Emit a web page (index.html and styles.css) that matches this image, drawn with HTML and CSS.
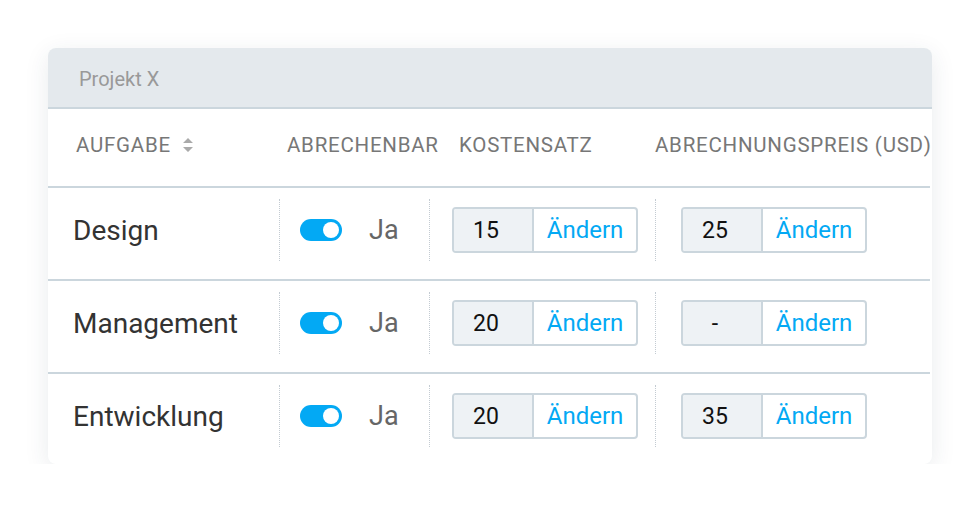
FILE: index.html
```html
<!DOCTYPE html>
<html lang="de">
<head>
  <meta charset="UTF-8">
  <title>Projekt X - Aufgaben</title>
  <link rel="stylesheet" href="styles.css">
</head>
<body>
  <div class="card">
    <div class="card-title">Projekt X</div>
    <div class="head">
      <div class="th th-task">Aufgabe
        <svg class="sort" width="10" height="14" viewBox="0 0 10 14"><path d="M5 0L10 5H0Z M5 14L0 9H10Z" fill="#aaa"/></svg>
      </div>
      <div class="th th-bill">Abrechenbar</div>
      <div class="th th-cost">Kostensatz</div>
      <div class="th th-price">Abrechnungspreis (USD)</div>
    </div>

    <div class="row">
      <div class="cell task">Design</div>
      <div class="cell bill"><span class="toggle"></span><span class="yes">Ja</span></div>
      <div class="cell cost"><div class="field"><span class="val">15</span><span class="edit">Ändern</span></div></div>
      <div class="cell price"><div class="field"><span class="val">25</span><span class="edit">Ändern</span></div></div>
    </div>
    <div class="row">
      <div class="cell task">Management</div>
      <div class="cell bill"><span class="toggle"></span><span class="yes">Ja</span></div>
      <div class="cell cost"><div class="field"><span class="val">20</span><span class="edit">Ändern</span></div></div>
      <div class="cell price"><div class="field"><span class="val">-</span><span class="edit">Ändern</span></div></div>
    </div>
    <div class="row">
      <div class="cell task">Entwicklung</div>
      <div class="cell bill"><span class="toggle"></span><span class="yes">Ja</span></div>
      <div class="cell cost"><div class="field"><span class="val">20</span><span class="edit">Ändern</span></div></div>
      <div class="cell price"><div class="field"><span class="val">35</span><span class="edit">Ändern</span></div></div>
    </div>
  </div>
</body>
</html>
```

FILE: styles.css
```css
* { margin:0; padding:0; box-sizing:border-box; }
body {
  background: #fff;
  font-family: Roboto, "Liberation Sans", Arial, sans-serif;
  padding: 48px 48px 0 48px;
  width: 980px;
}
.card {
  width: 884px;
  background: #fff;
  border-radius: 8px;
  box-shadow: 0 6px 24px rgba(40, 60, 80, 0.10);
  overflow: hidden;
}
.card-title {
  height: 61px;
  background: #e4e9ed;
  border-bottom: 2px solid #cbd6dd;
  padding: 19px 0 0 31px;
  font-size: 20px;
  color: #999;
}
.head {
  display: grid;
  grid-template-columns: 231px 150px 226px 277px;
  height: 79px;
  padding-bottom: 6px;
  align-items: center;
  border-bottom: 2px solid #cbd6dd;
  margin-right: 2px;
}
.th {
  font-size: 20.5px;
  letter-spacing: 0.75px;
  text-transform: uppercase;
  color: #777;
  white-space: nowrap;
}
.th-task { padding-left: 28px; display: flex; align-items: center; gap: 12px; }
.th-bill { padding-left: 8px; }
.th-cost { padding-left: 30px; }
.th-price { padding-left: 0; }
.sort { margin-top: 1px; }
.row {
  display: grid;
  grid-template-columns: 231px 150px 226px 277px;
  padding: 11px 0 18px;
  height: 93px;
  border-bottom: 2px solid #cbd6dd;
  margin-right: 2px;
}
.row:last-child { border-bottom: none; height: 90px; }
.cell {
  height: 62px;
  display: flex;
  align-items: center;
}
.task {
  padding-left: 25px;
  font-size: 28px;
  color: #333;
}
.bill, .cost, .price { border-left: 1px dotted #c3cbd2; }
.bill { padding-left: 20px; }
.cost { padding-left: 22px; }
.price { padding-left: 25px; }
.toggle {
  width: 42px;
  height: 22px;
  border-radius: 11px;
  background: #03a9f4;
  position: relative;
}
.toggle::after {
  content: "";
  position: absolute;
  right: 3px;
  top: 3px;
  width: 16px;
  height: 16px;
  border-radius: 50%;
  background: #fff;
}
.yes {
  margin-left: 27px;
  font-size: 27px;
  color: #666;
}
.field {
  display: flex;
  height: 46px;
  border: 2px solid #cbd6dd;
  border-radius: 4px;
  overflow: hidden;
}
.val {
  width: 80px;
  background: #eef2f5;
  border-right: 2px solid #cbd6dd;
  display: flex;
  align-items: center;
  justify-content: center;
  padding-right: 14px;
  font-size: 23px;
  color: #111;
}
.edit {
  width: 102px;
  display: flex;
  align-items: center;
  justify-content: center;
  font-size: 24px;
  color: #03a9f4;
}
```
